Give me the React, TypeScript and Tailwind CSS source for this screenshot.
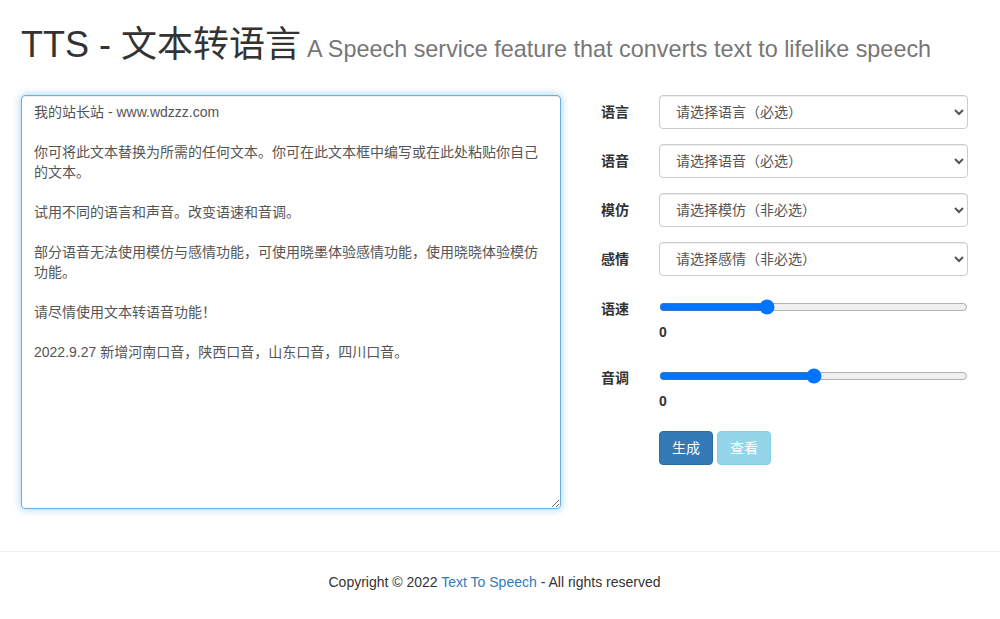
import React from "react";

const text = `我的站长站 - www.wdzzz.com

你可将此文本替换为所需的任何文本。你可在此文本框中编写或在此处粘贴你自己的文本。

试用不同的语言和声音。改变语速和音调。

部分语音无法使用模仿与感情功能，可使用晓墨体验感情功能，使用晓晓体验模仿功能。

请尽情使用文本转语音功能！

2022.9.27 新增河南口音，陕西口音，山东口音，四川口音。`;

const font = { fontFamily: '"Liberation Sans", Arial, "Noto Sans CJK SC", sans-serif' };

function SelectRow({ label, placeholder }: { label: string; placeholder: string }) {
  return (
    <div className="flex items-center h-[34px] mb-[15px]">
      <div className="w-[58px] text-[14px] font-bold text-[#333]">{label}</div>
      <select
        className="w-[309px] h-[34px] border border-[#ccc] rounded-[4px] bg-white pl-[12px] pr-[8px] text-[14px] text-[#555] shadow-[inset_0_1px_1px_rgba(0,0,0,0.075)]"
        defaultValue=""
      >
        <option value="">{placeholder}</option>
      </select>
    </div>
  );
}

function SliderRow({ label, value }: { label: string; value: number }) {
  return (
    <div className="flex">
      <div className="w-[58px] text-[14px] font-bold text-[#333] leading-[20px]">{label}</div>
      <div className="w-[309px]">
        <input
          type="range"
          min={0}
          max={100}
          defaultValue={value}
          className="w-[309px] h-[16px] m-0 block"
        />
        <div className="mt-[7px] text-[14px] font-bold text-[#333] leading-[20px]">0</div>
      </div>
    </div>
  );
}

export default function App() {
  return (
    <div className="w-[1000px] min-h-[619px] bg-white text-[#333]" style={font}>
      <h1 className="pl-[21px] pt-[25px] text-[36px] leading-[40px] text-[#333] font-normal whitespace-nowrap">
        TTS - 文本转语言
        <small className="ml-[6px] text-[23.4px] text-[#777]">A Speech service feature that converts text to lifelike speech</small>
      </h1>
      <div className="flex mt-[26px]">
        <textarea
          className="ml-[21px] w-[540px] h-[414px] border border-[#66afe9] rounded-[4px] px-[12px] py-[6px] text-[14px] leading-[20px] text-[#555] outline-none shadow-[inset_0_1px_1px_rgba(0,0,0,0.075),0_0_8px_rgba(102,175,233,0.6)]"
          defaultValue={text}
        />
        <div className="ml-[40px] flex flex-col">
          <SelectRow label="语言" placeholder="请选择语言（必选）" />
          <SelectRow label="语音" placeholder="请选择语音（必选）" />
          <SelectRow label="模仿" placeholder="请选择模仿（非必选）" />
          <SelectRow label="感情" placeholder="请选择感情（非必选）" />
          <div className="mt-[8px]">
            <SliderRow label="语速" value={34} />
          </div>
          <div className="mt-[26px]">
            <SliderRow label="音调" value={50} />
          </div>
          <div className="flex ml-[58px] mt-[20px] gap-[4px]">
            <button className="h-[34px] w-[54px] rounded-[4px] bg-[#337ab7] border border-[#2e6da4] text-white text-[14px]">
              生成
            </button>
            <button className="h-[34px] w-[54px] rounded-[4px] bg-[#5bc0de] border border-[#46b8da] text-white text-[14px] opacity-65">
              查看
            </button>
          </div>
        </div>
      </div>
      <div className="mt-[42px] border-t border-[#eee] pt-[20px] pr-[11px] text-center text-[14px] leading-[20px] text-[#333]">
        Copyright © 2022 <span className="text-[#337ab7]">Text To Speech</span> - All rights reserved
      </div>
    </div>
  );
}
